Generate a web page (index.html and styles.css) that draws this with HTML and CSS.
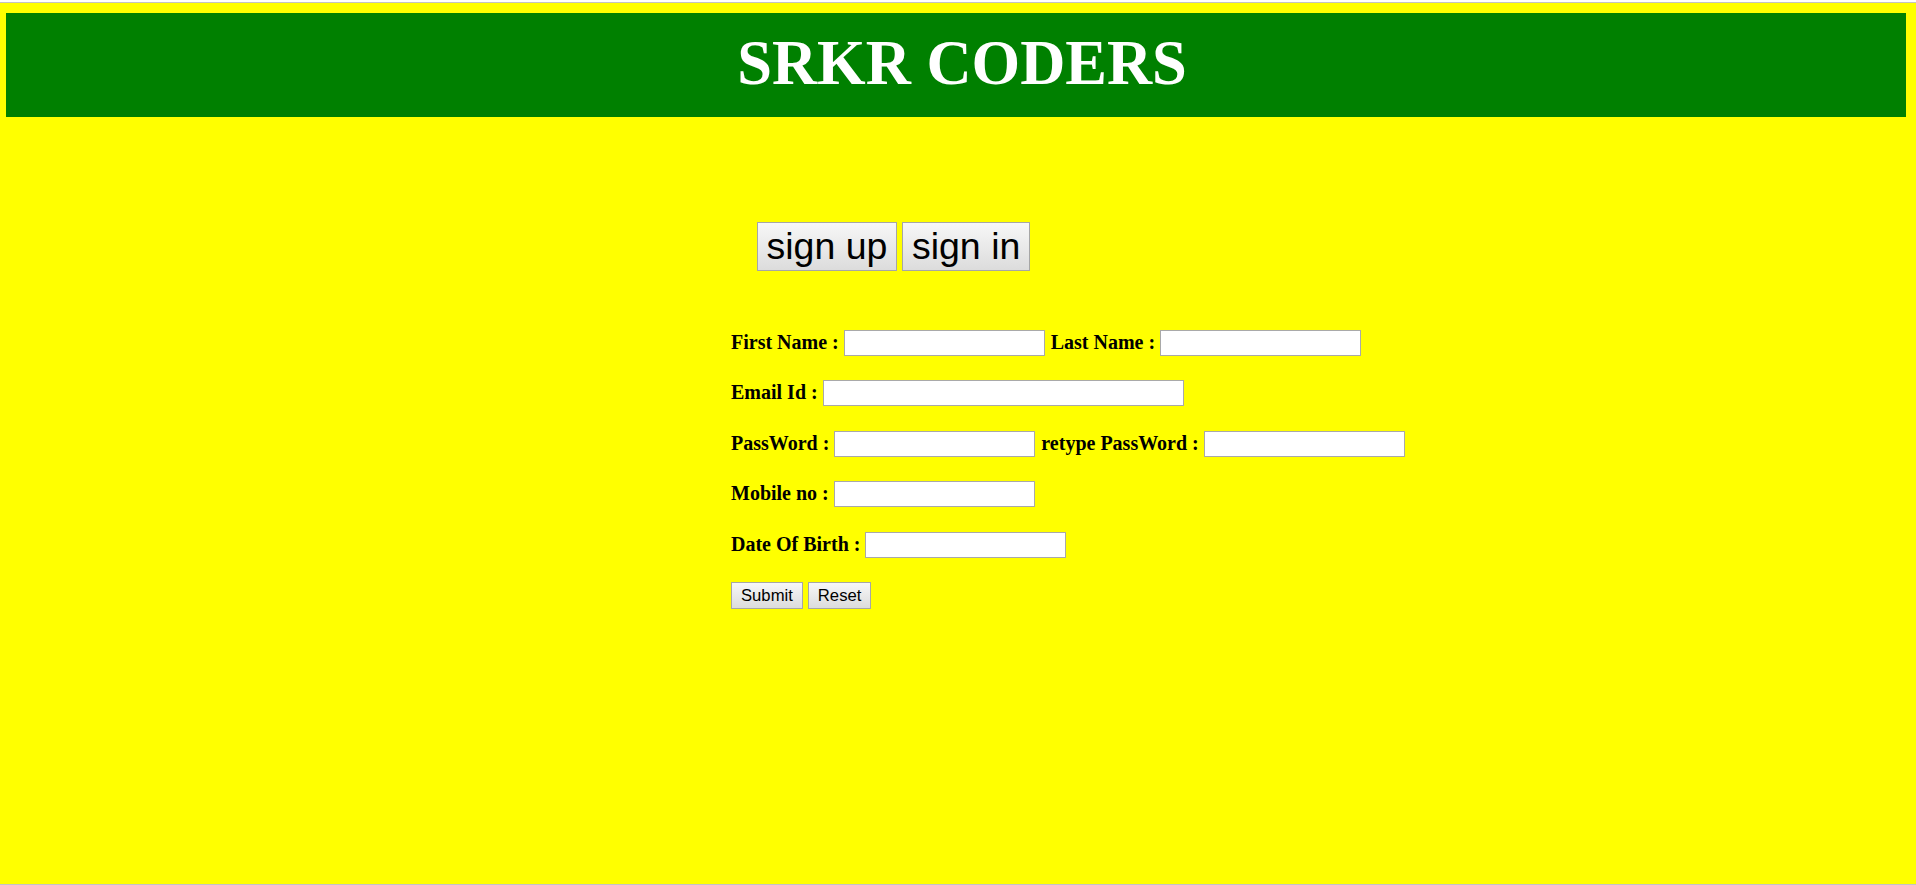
FILE: index.html
```html
<!DOCTYPE html>
<html>
<head>
<meta charset="utf-8">
<title>SRKR CODERS</title>
<link rel="stylesheet" href="styles.css">
</head>
<body>
<div class="page">
  <h1 class="banner">SRKR CODERS</h1>
  <div class="tabs">
    <button class="tab">sign up</button>
    <button class="tab">sign in</button>
  </div>
  <form class="form">
    <div class="row">
      <b class="label">First Name :</b>
      <input class="field" type="text">
      <b class="label next">Last Name :</b>
      <input class="field" type="text">
    </div>
    <div class="row">
      <b class="label">Email Id :</b>
      <input class="field wide" type="text">
    </div>
    <div class="row">
      <b class="label">PassWord :</b>
      <input class="field" type="password">
      <b class="label next">retype PassWord :</b>
      <input class="field" type="password">
    </div>
    <div class="row">
      <b class="label">Mobile no :</b>
      <input class="field" type="text">
    </div>
    <div class="row">
      <b class="label">Date Of Birth :</b>
      <input class="field" type="text">
    </div>
    <div class="row actions">
      <button class="btn" type="button">Submit</button>
      <button class="btn" type="button">Reset</button>
    </div>
  </form>
</div>
</body>
</html>
```

FILE: styles.css
```css
html {
  background: #ffffff;
}

body {
  margin: 0;
  font-family: "Liberation Serif", "Times New Roman", serif;
}

.page {
  margin-top: 2px;
  height: 881px;
  border-top: 1px solid #c3c3c3;
  border-bottom: 1px solid #c3c3c3;
  background: #ffff00;
  overflow: hidden;
}

.banner {
  margin: 10px 10px 0 6px;
  height: 104px;
  box-sizing: border-box;
  padding: 14px 0 0 12px;
  background: #008000;
  color: #ffffff;
  text-align: center;
  font-family: "Liberation Serif", "Times New Roman", serif;
  font-weight: bold;
  font-size: 62.5px;
  line-height: normal;
}

.tabs {
  display: flex;
  gap: 5.5px;
  margin: 105px 0 0 757px;
}

.tab {
  height: 49px;
  box-sizing: border-box;
  padding: 0 8.5px;
  border: 1px solid #a6a6a6;
  border-radius: 0;
  background: linear-gradient(#f7f7f7, #dcdcdc);
  color: #000000;
  font-family: "Liberation Sans", Arial, sans-serif;
  font-size: 37.5px;
  line-height: normal;
}

.form {
  display: flex;
  flex-direction: column;
  gap: 24.4px;
  margin: 59px 0 0 731px;
}

.row {
  display: flex;
  align-items: flex-start;
  gap: 5px;
  height: 26px;
}

.label {
  margin-top: 1px;
  font-size: 20px;
  font-weight: bold;
  line-height: normal;
  color: #000000;
  white-space: nowrap;
}

.label.next {
  margin-left: 1px;
}

.field {
  width: 201px;
  height: 26px;
  box-sizing: border-box;
  margin: 0;
  padding: 1px 2px;
  border: 1px solid #a9a9a9;
  border-radius: 0;
  background: #ffffff;
  font-family: "Liberation Sans", Arial, sans-serif;
  font-size: 16.67px;
}

.field.wide {
  width: 361px;
}

.actions {
  height: 27px;
  gap: 5px;
  margin-top: 0.3px;
}

.btn {
  height: 27px;
  box-sizing: border-box;
  margin: 0;
  padding: 0 9px;
  border: 1px solid #a6a6a6;
  border-radius: 0;
  background: linear-gradient(#f7f7f7, #dcdcdc);
  color: #000000;
  font-family: "Liberation Sans", Arial, sans-serif;
  font-size: 16.67px;
  line-height: normal;
}
```
